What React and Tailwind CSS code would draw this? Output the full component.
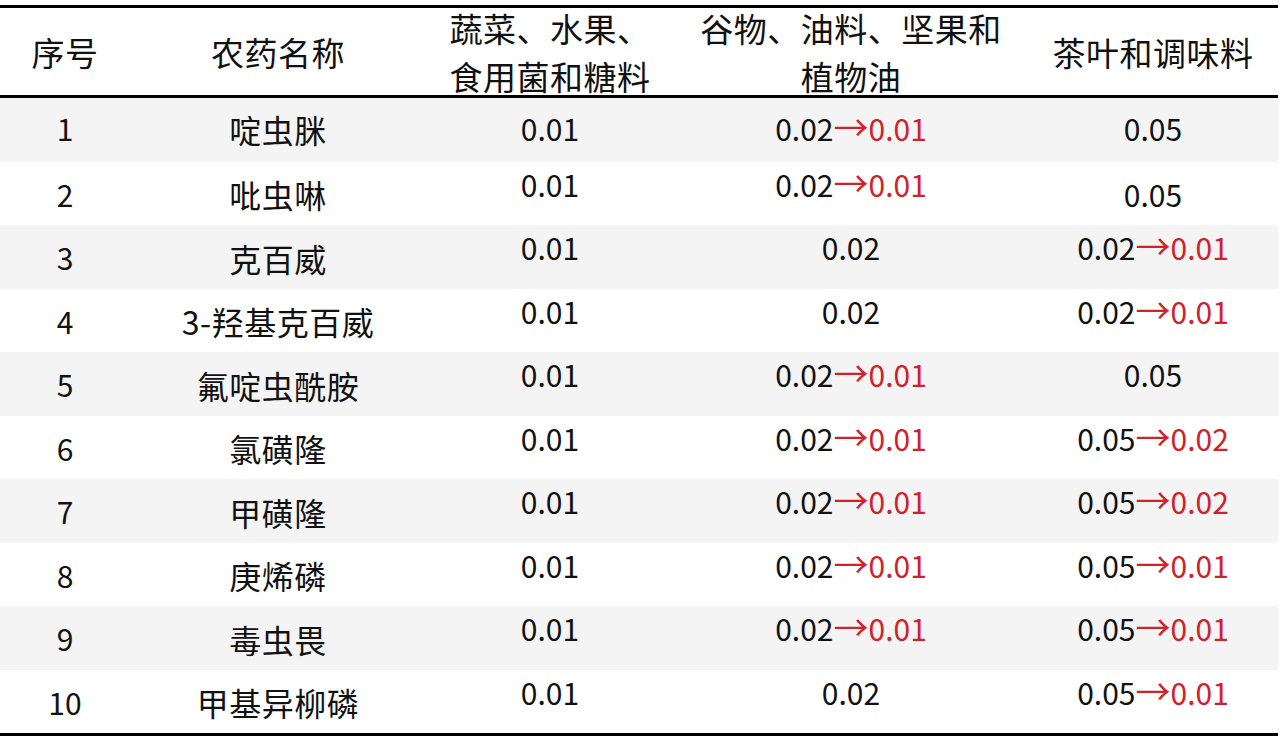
import React from 'react';

// --- Pesticide MRL revision table ---
const rows = [
  { no: '1', name: '啶虫脒', veg: ['0.01'], grain: ['0.02', '0.01'], tea: ['0.05'], shift: 'mid' },
  { no: '2', name: '吡虫啉', veg: ['0.01'], grain: ['0.02', '0.01'], tea: ['0.05'], shift: 'second' },
  { no: '3', name: '克百威', veg: ['0.01'], grain: ['0.02'], tea: ['0.02', '0.01'] },
  { no: '4', name: '3-羟基克百威', veg: ['0.01'], grain: ['0.02'], tea: ['0.02', '0.01'] },
  { no: '5', name: '氟啶虫酰胺', veg: ['0.01'], grain: ['0.02', '0.01'], tea: ['0.05'] },
  { no: '6', name: '氯磺隆', veg: ['0.01'], grain: ['0.02', '0.01'], tea: ['0.05', '0.02'] },
  { no: '7', name: '甲磺隆', veg: ['0.01'], grain: ['0.02', '0.01'], tea: ['0.05', '0.02'] },
  { no: '8', name: '庚烯磷', veg: ['0.01'], grain: ['0.02', '0.01'], tea: ['0.05', '0.01'] },
  { no: '9', name: '毒虫畏', veg: ['0.01'], grain: ['0.02', '0.01'], tea: ['0.05', '0.01'] },
  { no: '10', name: '甲基异柳磷', veg: ['0.01'], grain: ['0.02'], tea: ['0.05', '0.01'] },
];

const font = { fontFamily: '"Noto Sans CJK SC", "Noto Sans", sans-serif' };

function Value({ v }) {
  if (v.length === 1) return <span>{v[0]}</span>;
  return (
    <span>
      {v[0]}
      <span className="text-[#cf2229]">
        <span className="text-[35px] leading-none">→</span>{v[1]}
      </span>
    </span>
  );
}

function Cell({ children, pos }) {
  // pos: 'low' sits a bit under centre, 'high' a bit above, 'mid' ~centre
  const pad = pos === 'low' ? 'pt-[2px]' : pos === 'high' ? 'pb-[18px]' : 'pb-[2px]';
  return <div className={`flex items-center justify-center whitespace-nowrap ${pad}`}>{children}</div>;
}

function HeadCell({ children }) {
  return <div className="h-[87px] flex items-center justify-center text-center">{children}</div>;
}

export default function App() {
  return (
    <div className="w-[1280px] h-[745px] bg-white pt-[5px] text-[#111]" style={font}>
      <div className="w-[1278px] border-t-[3px] border-b-[3px] border-black">
        {/* header */}
        <div className="grid grid-cols-[130px_296px_248px_354px_250px] h-[90px] border-b-[3px] border-black text-[33px] leading-[48px] tracking-[0.5px]">
          <HeadCell>序号</HeadCell>
          <HeadCell>农药名称</HeadCell>
          <HeadCell><div>蔬菜、水果、<br />食用菌和糖料</div></HeadCell>
          <HeadCell><div>谷物、油料、坚果和<br />植物油</div></HeadCell>
          <HeadCell>茶叶和调味料</HeadCell>
        </div>

        {/* body */}
        {rows.map((r, i) => {
          const bg = i % 2 === 0 ? 'bg-[#f4f4f4]' : 'bg-white';
          let p = ['low', 'low', 'high', 'high', 'high'];
          if (r.shift === 'mid') p = ['mid', 'mid', 'mid', 'mid', 'mid'];
          if (r.shift === 'second') p = ['low', 'low', 'high', 'high', 'low'];
          return (
            <div key={r.no} className={`grid grid-cols-[130px_296px_248px_354px_250px] h-[63.5px] ${bg}`}>
              <Cell pos={p[0]}><span className="text-[30px]">{r.no}</span></Cell>
              <Cell pos={p[1]}><span className="text-[32px] tracking-[0.5px]">{r.name}</span></Cell>
              <Cell pos={p[2]}><span className="text-[30px]"><Value v={r.veg} /></span></Cell>
              <Cell pos={p[3]}><span className="text-[30px]"><Value v={r.grain} /></span></Cell>
              <Cell pos={p[4]}><span className="text-[30px]"><Value v={r.tea} /></span></Cell>
            </div>
          );
        })}
      </div>
    </div>
  );
}
